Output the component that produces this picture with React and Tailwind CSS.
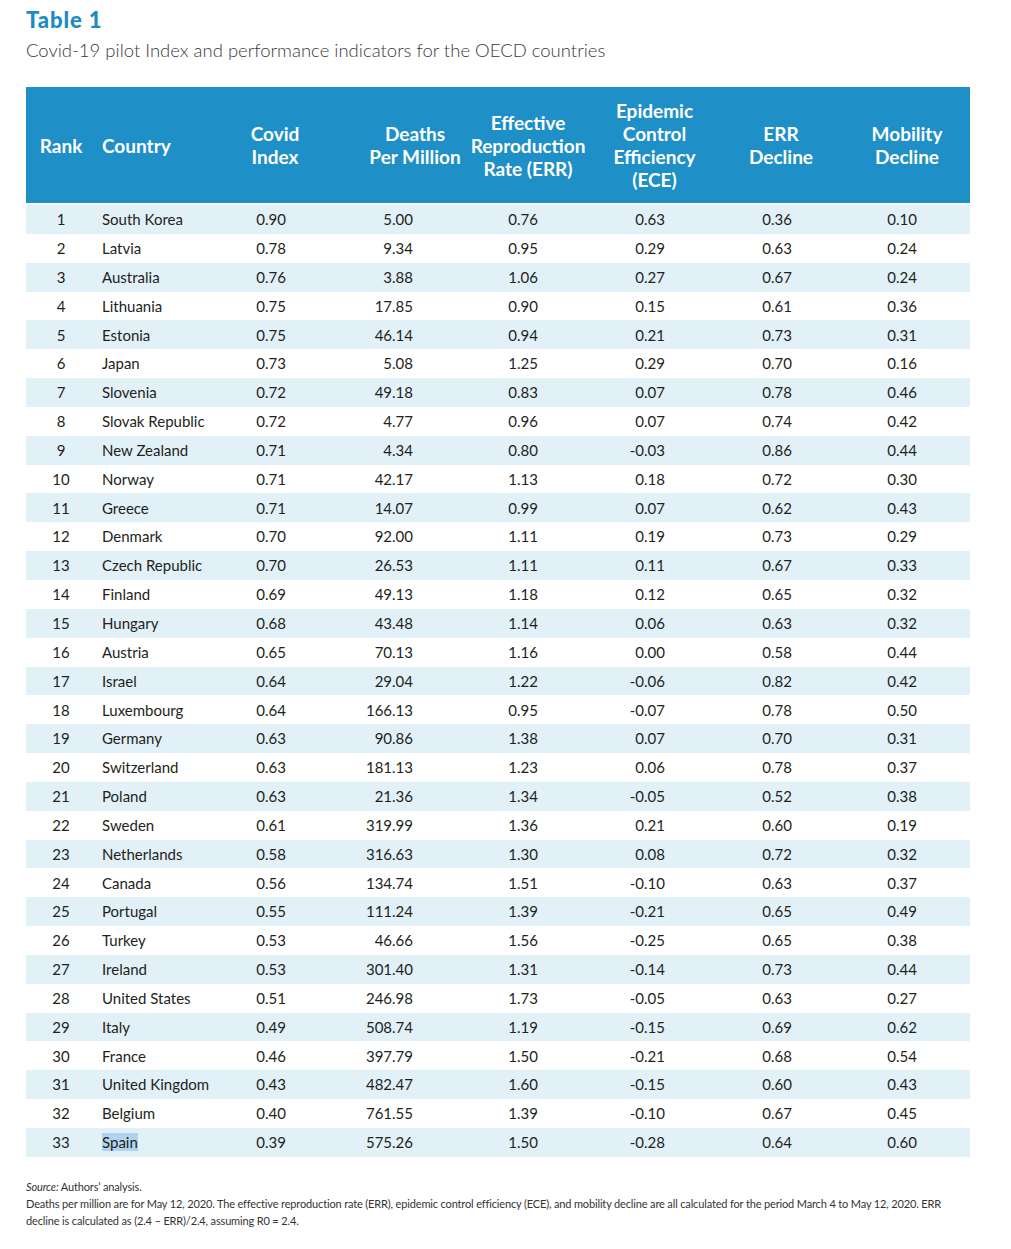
const rows = [
  [1, "South Korea", "0.90", "5.00", "0.76", "0.63", "0.36", "0.10"],
  [2, "Latvia", "0.78", "9.34", "0.95", "0.29", "0.63", "0.24"],
  [3, "Australia", "0.76", "3.88", "1.06", "0.27", "0.67", "0.24"],
  [4, "Lithuania", "0.75", "17.85", "0.90", "0.15", "0.61", "0.36"],
  [5, "Estonia", "0.75", "46.14", "0.94", "0.21", "0.73", "0.31"],
  [6, "Japan", "0.73", "5.08", "1.25", "0.29", "0.70", "0.16"],
  [7, "Slovenia", "0.72", "49.18", "0.83", "0.07", "0.78", "0.46"],
  [8, "Slovak Republic", "0.72", "4.77", "0.96", "0.07", "0.74", "0.42"],
  [9, "New Zealand", "0.71", "4.34", "0.80", "-0.03", "0.86", "0.44"],
  [10, "Norway", "0.71", "42.17", "1.13", "0.18", "0.72", "0.30"],
  [11, "Greece", "0.71", "14.07", "0.99", "0.07", "0.62", "0.43"],
  [12, "Denmark", "0.70", "92.00", "1.11", "0.19", "0.73", "0.29"],
  [13, "Czech Republic", "0.70", "26.53", "1.11", "0.11", "0.67", "0.33"],
  [14, "Finland", "0.69", "49.13", "1.18", "0.12", "0.65", "0.32"],
  [15, "Hungary", "0.68", "43.48", "1.14", "0.06", "0.63", "0.32"],
  [16, "Austria", "0.65", "70.13", "1.16", "0.00", "0.58", "0.44"],
  [17, "Israel", "0.64", "29.04", "1.22", "-0.06", "0.82", "0.42"],
  [18, "Luxembourg", "0.64", "166.13", "0.95", "-0.07", "0.78", "0.50"],
  [19, "Germany", "0.63", "90.86", "1.38", "0.07", "0.70", "0.31"],
  [20, "Switzerland", "0.63", "181.13", "1.23", "0.06", "0.78", "0.37"],
  [21, "Poland", "0.63", "21.36", "1.34", "-0.05", "0.52", "0.38"],
  [22, "Sweden", "0.61", "319.99", "1.36", "0.21", "0.60", "0.19"],
  [23, "Netherlands", "0.58", "316.63", "1.30", "0.08", "0.72", "0.32"],
  [24, "Canada", "0.56", "134.74", "1.51", "-0.10", "0.63", "0.37"],
  [25, "Portugal", "0.55", "111.24", "1.39", "-0.21", "0.65", "0.49"],
  [26, "Turkey", "0.53", "46.66", "1.56", "-0.25", "0.65", "0.38"],
  [27, "Ireland", "0.53", "301.40", "1.31", "-0.14", "0.73", "0.44"],
  [28, "United States", "0.51", "246.98", "1.73", "-0.05", "0.63", "0.27"],
  [29, "Italy", "0.49", "508.74", "1.19", "-0.15", "0.69", "0.62"],
  [30, "France", "0.46", "397.79", "1.50", "-0.21", "0.68", "0.54"],
  [31, "United Kingdom", "0.43", "482.47", "1.60", "-0.15", "0.60", "0.43"],
  [32, "Belgium", "0.40", "761.55", "1.39", "-0.10", "0.67", "0.45"],
  [33, "Spain", "0.39", "575.26", "1.50", "-0.28", "0.64", "0.60"],
];

const cols = "grid grid-cols-[70px_109px_140px_126px_120px_127px_126px_126px]";

function HeaderCell({ lines, className = "justify-center text-center" }) {
  return (
    <div className={`flex items-center ${className}`}>
      <div className="whitespace-nowrap">
        {lines.map((l, i) => (
          <div key={i}>{l}</div>
        ))}
      </div>
    </div>
  );
}

export default function App() {
  return (
    <div className="w-[1011px] min-h-[1249px] bg-white px-[26px] pt-[7px] text-[#231f20] font-['Lato',sans-serif]">
      <h1 className="text-[22px] font-black leading-[26px] tracking-[0.9px] text-[#1a8bc4]">Table 1</h1>
      <p className="mt-[5px] text-[18.5px] font-light leading-[24px] text-[#3a3a3a]">
        Covid-19 pilot Index and performance indicators for the OECD countries
      </p>

      <div className="mt-[25px] w-[944px]">
        <div className={`${cols} h-[116px] bg-[#1e8fc7] text-[19px] font-bold leading-[23px] text-white`}>
          <HeaderCell lines={["Rank"]} />
          <HeaderCell lines={["Country"]} className="justify-start pl-[6px]" />
          <HeaderCell lines={["Covid", "Index"]} />
          <HeaderCell lines={["Deaths", "Per Million"]} className="justify-center text-center pl-[14px]" />
          <HeaderCell lines={["Effective", "Reproduction", "Rate (ERR)"]} className="justify-center text-center pr-[6px]" />
          <HeaderCell lines={["Epidemic", "Control", "Efficiency", "(ECE)"]} />
          <HeaderCell lines={["ERR", "Decline"]} />
          <HeaderCell lines={["Mobility", "Decline"]} />
        </div>

        <div className="mt-[2px] text-[15px]">
          {rows.map((r, i) => (
            <div
              key={r[0]}
              className={`${cols} h-[28.85px] items-center ${i % 2 === 0 ? "bg-[#e2f0f8]" : "bg-white"}`}
            >
              <div className="text-center">{r[0]}</div>
              <div className="whitespace-nowrap pl-[6px]">
                {r[1] === "Spain" ? <span className="bg-[#b2d3ef]">{r[1]}</span> : r[1]}
              </div>
              <div className="pr-[59px] text-right">{r[2]}</div>
              <div className="pr-[58px] text-right">{r[3]}</div>
              <div className="pr-[53px] text-right">{r[4]}</div>
              <div className="pr-[53px] text-right">{r[5]}</div>
              <div className="pr-[52px] text-right">{r[6]}</div>
              <div className="pr-[53px] text-right">{r[7]}</div>
            </div>
          ))}
        </div>
      </div>

      <div className="mt-[21px] whitespace-nowrap text-[11px] leading-[17px] tracking-[-0.15px] text-[#333]">
        <div>
          <span className="italic">Source:</span> Authors’ analysis.
        </div>
        <div>
          Deaths per million are for May 12, 2020. The effective reproduction rate (ERR), epidemic control efficiency (ECE), and mobility decline are all calculated for the period March 4 to May 12, 2020. ERR
        </div>
        <div>decline is calculated as (2.4 – ERR)/2.4, assuming R0 = 2.4.</div>
      </div>
    </div>
  );
}
